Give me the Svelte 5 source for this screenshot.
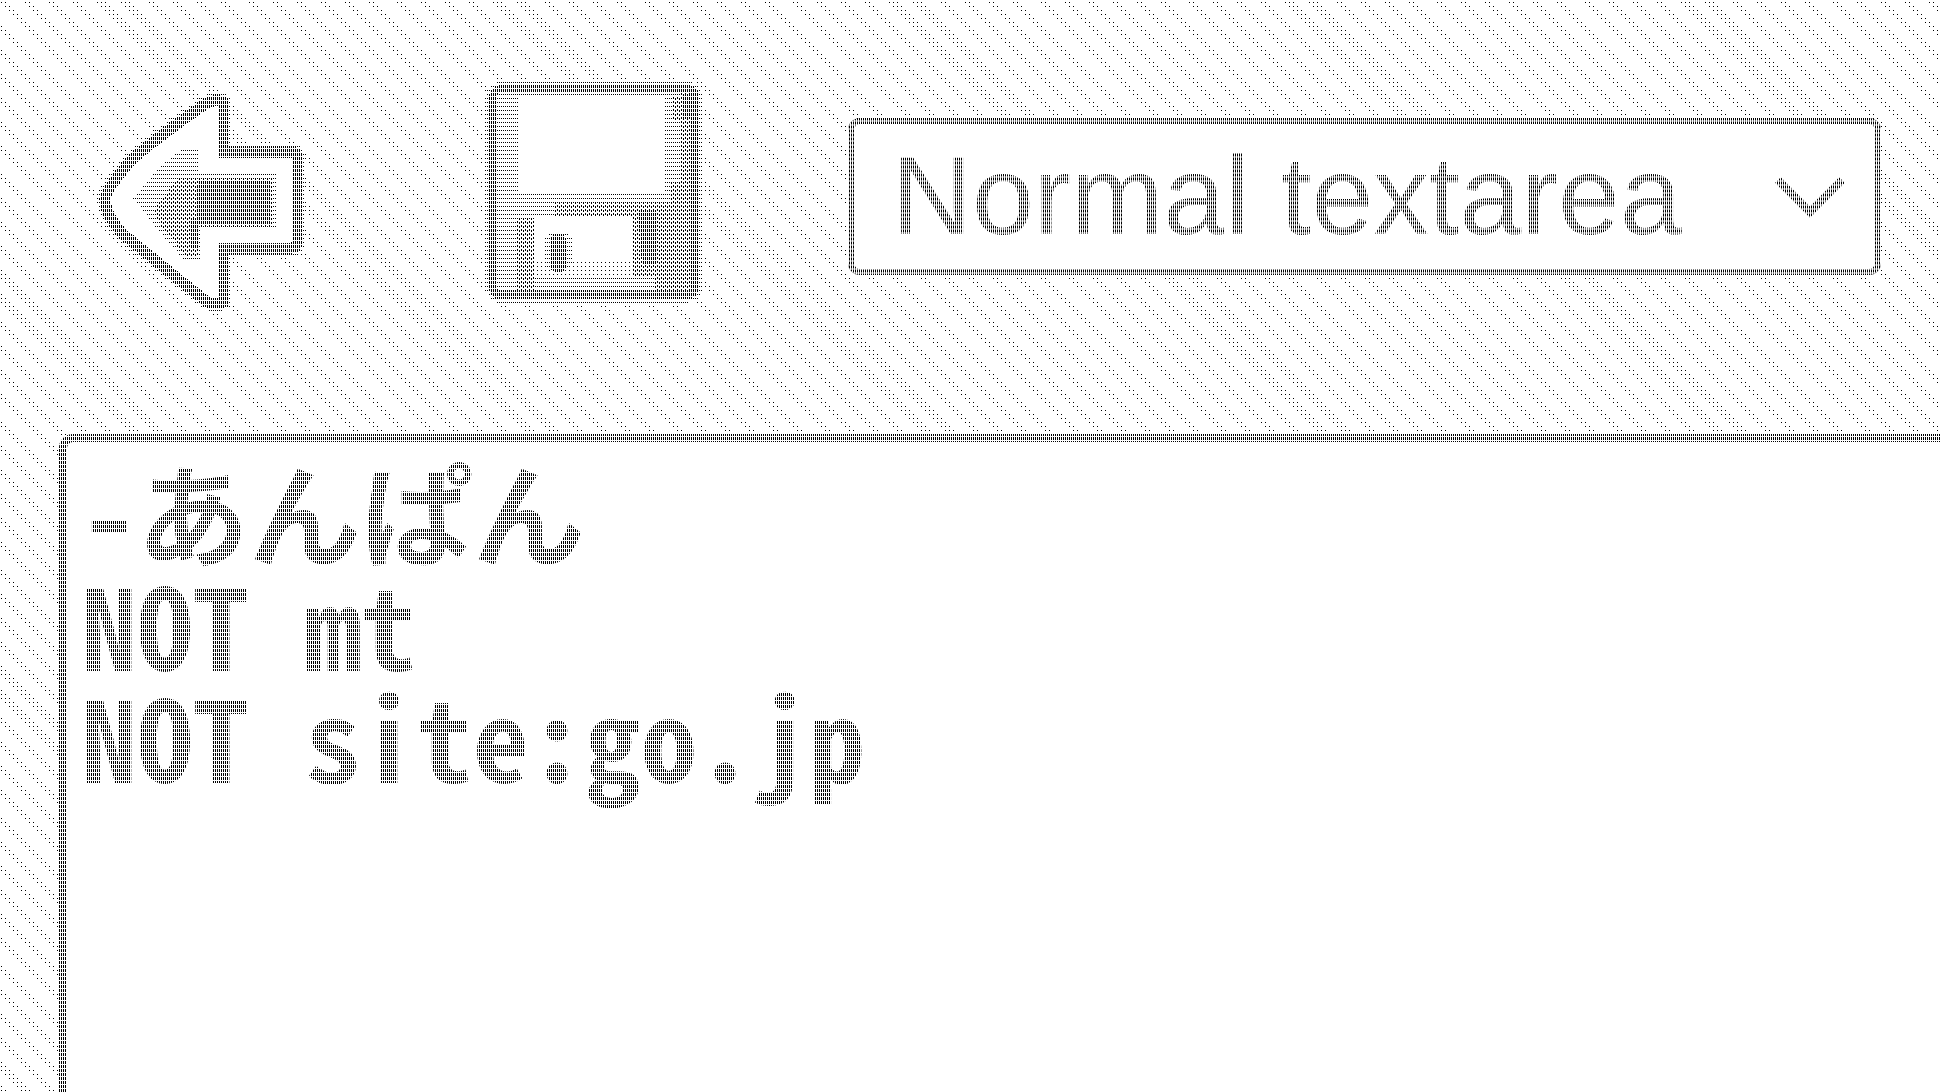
<script>
	let mode = 'normal';
	let text = '-あんぱん\nNOT mt\nNOT site:go.jp';
</script>

<!-- halftone tones shared by both icons, lightest first -->
<svg class="defs" aria-hidden="true">
	<defs>
		<pattern id="faint" width="4" height="4" patternUnits="userSpaceOnUse">
			<rect x="1" y="2" width="1" height="1" />
		</pattern>
		<pattern id="soft" width="2" height="4" patternUnits="userSpaceOnUse">
			<rect x="1" y="2" width="1" height="1" />
		</pattern>
		<pattern id="mid" width="4" height="4" patternUnits="userSpaceOnUse">
			<rect x="1" y="1" width="1" height="2" />
			<rect x="3" y="2" width="1" height="2" />
		</pattern>
		<pattern id="dark" width="2" height="4" patternUnits="userSpaceOnUse">
			<rect x="1" y="1" width="1" height="3" />
		</pattern>
	</defs>
</svg>

<main>
	<header>
		<button type="button" aria-label="Back">
			<svg viewBox="0 0 240 248" shape-rendering="crispEdges">
				<path class="halo" d="M25 128 Q24 120 50 90 Q64 76 100 50 L124 33 Q134 26 143 30 V80 H212 Q217 80 217 85 V170 Q217 176 212 176 H143 V230 Q134 234 126 229 L97 206 L43 162 Q26 144 25 128Z" />
				<path class="outline" d="M25 128 Q24 120 50 90 Q64 76 100 50 L124 33 Q134 26 143 30 V80 H212 Q217 80 217 85 V170 Q217 176 212 176 H143 V230 Q134 234 126 229 L97 206 L43 162 Q26 144 25 128Z" />
				<path class="soft" d="M53 126 L80 95 L104 75 H118 V102 H197 V158 H121 V190 H106 L76 156Z" />
				<path class="mid" d="M74 138 L98 106 H192 V155 H119 V184 H106 L80 152Z" />
				<path class="dark" d="M120 108 H190 V152 H118 V176 H110 V146 H116 V116Z" />
			</svg>
		</button>

		<button type="button" aria-label="Save">
			<svg viewBox="0 0 240 248" shape-rendering="crispEdges">
				<rect class="halo" x="29" y="17" width="202" height="206" rx="10" />
				<rect class="white" x="25" y="13" width="210" height="214" rx="12" />
				<rect class="soft" x="30" y="18" width="200" height="204" />
				<path class="mid" d="M216 20 H232 V224 H50 V146 H90 V131 H206 V110 H216Z" />
				<path class="soft" d="M206 20 H216 V120 H206Z" />
				<path class="mid" d="M209 24 H218 V48 H209Z" />
				<path class="dark" d="M219 22 H230 V46 H219Z" />
				<rect class="white" x="54" y="26" width="147" height="93" />
				<rect class="white" x="38" y="144" width="14" height="78" />
				<rect class="soft" x="38" y="144" width="14" height="78" />
				<rect class="white" x="70" y="144" width="99" height="76" />
				<rect class="faint" x="70" y="188" width="99" height="20" />
				<path class="white" d="M70 204 H190 V219 H70Z" />
				<path class="soft" d="M70 204 H190 V220 H70Z" />
				<path class="dark" d="M174 138 H192 V192 H178Z" />
				<rect class="soft" x="80" y="162" width="28" height="36" rx="6" />
				<rect class="dark" x="86" y="162" width="16" height="38" rx="6" />
				<rect class="edge" x="29" y="17" width="202" height="206" rx="8" />
			</svg>
		</button>

		<div class="picker">
			<select aria-label="Editor type" bind:value={mode}>
				<option value="normal">Normal textarea</option>
				<option value="rich">Rich editor</option>
			</select>
			<svg class="chevron" viewBox="0 0 72 44" aria-hidden="true">
				<path d="M3 4 L35 36 L67 4" />
			</svg>
		</div>
	</header>

	<div class="editor">
		<textarea aria-label="Rules" spellcheck="false" bind:value={text}></textarea>
	</div>
</main>

<style>
	:global(html) {
		height: 100%;
		overflow: hidden;
	}
	:global(body) {
		height: 100vh;
		margin: 0;
		overflow: hidden;
		/* diagonal stripes seen through a grid of 1px holes */
		background-color: #fff;
		background-image:
			linear-gradient(to right, #fff 1px, transparent 1px 2px, #fff 2px),
			linear-gradient(to bottom, #fff 2px, transparent 2px 3px, #fff 3px),
			repeating-linear-gradient(
				45deg,
				#000 0 3px,
				#fff 3px 14px,
				#000 14px 20px,
				#fff 20px 32px,
				#000 32px 35px
			);
		background-size: 4px 4px, 4px 4px, 396px 396px;
	}
	main {
		display: flex;
		flex-direction: column;
		height: 100vh;
		overflow: hidden;
	}
	.defs {
		position: absolute;
		width: 0;
		height: 0;
	}
	header {
		display: flex;
		align-items: center;
		gap: 144px;
		padding: 72px 60px 114px 80px;
	}
	button {
		flex: none;
		padding: 0;
		border: 0;
		background: none;
		cursor: pointer;
	}
	button svg {
		display: block;
		width: 240px;
		height: 248px;
	}
	.halo {
		fill: none;
		stroke: url(#soft);
		stroke-width: 16px;
	}
	.outline {
		fill: #fff;
		stroke: url(#dark);
		stroke-width: 11px;
	}
	.edge {
		fill: none;
		stroke: url(#dark);
		stroke-width: 8px;
	}
	.white {
		fill: #fff;
	}
	.faint {
		fill: url(#faint);
	}
	.soft {
		fill: url(#soft);
	}
	.mid {
		fill: url(#mid);
	}
	.dark {
		fill: url(#dark);
	}
	.picker {
		position: relative;
		flex: 1;
		min-width: 0;
	}
	select {
		display: block;
		box-sizing: border-box;
		width: 100%;
		height: 157px;
		padding: 0 140px 0 38px;
		border: 6px solid #000;
		border-radius: 12px;
		background: #fff;
		color: #000;
		font: 111px 'Liberation Sans', Arial, sans-serif;
		appearance: none;
	}
	.chevron {
		position: absolute;
		top: 58px;
		right: 34px;
		width: 72px;
		height: 44px;
		pointer-events: none;
	}
	.chevron path {
		fill: none;
		stroke: #000;
		stroke-width: 8px;
	}
	.editor {
		position: relative;
		flex: 1;
		margin: 0 -40px -40px 59px;
	}
	textarea {
		display: block;
		box-sizing: border-box;
		width: 100%;
		height: 100%;
		padding: 12px 14px;
		border: 8px solid #000;
		border-radius: 14px;
		background: #fff;
		color: #000;
		font: bold 112px/112px 'Noto Sans Mono CJK JP', 'Noto Sans CJK JP', monospace;
		resize: none;
		outline: none;
	}
	/* screen laid over the fields so that their ink turns into halftone */
	.picker::after,
	.editor::after {
		content: '';
		position: absolute;
		inset: 0;
		border-radius: 12px;
		background-image:
			linear-gradient(to right, #fff 1px, transparent 1px),
			linear-gradient(to bottom, #fff 1px, transparent 1px);
		background-size: 2px 4px;
		background-attachment: fixed;
		pointer-events: none;
	}
</style>
